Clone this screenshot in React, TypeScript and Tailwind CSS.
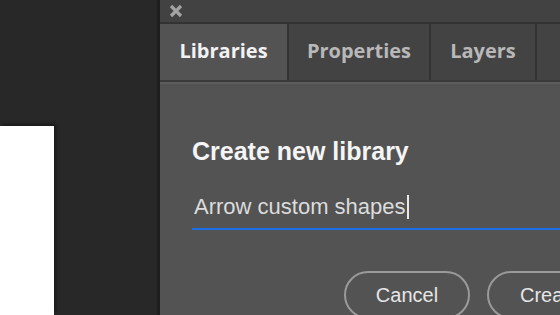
import React from 'react';

const tabs = [
  { label: 'Libraries', width: 'w-[127px]', active: true },
  { label: 'Properties', width: 'w-[142px]', active: false },
  { label: 'Layers', width: 'w-[106px]', active: false },
  { label: '', width: 'w-[40px]', active: false },
];

const App: React.FC = () => {
  return (
    <div className="flex w-[560px] h-[315px] overflow-hidden bg-[#282828]">
      {/* canvas area */}
      <div className="w-[157px] shrink-0 bg-[#282828] flex flex-col">
        <div className="w-[54px] mt-[126px] flex-1 bg-white shadow-[2px_-2px_4px_rgba(0,0,0,0.4)]" />
      </div>
      <div className="w-[3px] shrink-0 bg-[#1f1f1f]" />

      {/* panel */}
      <div className="flex-1 flex flex-col bg-[#535353] min-w-0">
        <div className="h-[22px] shrink-0 bg-[#424242] flex items-center pl-[9px]">
          <svg width="14" height="14" viewBox="0 0 14 14">
            <path d="M2 2 L12 12 M12 2 L2 12" stroke="#a3a3a3" strokeWidth="3.2" strokeLinecap="butt" />
          </svg>
        </div>
        <div className="h-[2px] shrink-0 bg-[#333333]" />
        <div className="h-[56px] shrink-0 flex">
          {tabs.map((t, i) => (
            <div
              key={i}
              className={`${t.width} shrink-0 flex items-center justify-center pb-[3px] text-[20px] font-bold ${
                t.active ? 'bg-[#535353] text-[#f2f2f2]' : 'bg-[#434343] text-[#b8b8b8] border-l-2 border-[#333333]'
              }`}
              style={{ fontFamily: '"Open Sans", sans-serif' }}
            >
              {t.label}
            </div>
          ))}
        </div>
        <div className="h-[2px] shrink-0 bg-[#3a3a3a]" />
        <div className="h-[2px] shrink-0 bg-[#5d5d5d]" />

        <div className="flex-1 pl-[32px] pt-[55px]" style={{ fontFamily: '"Liberation Sans", Arial, sans-serif' }}>
          <div className="text-[25px] font-bold text-[#f5f5f5] leading-none whitespace-nowrap">Create new library</div>
          <div className="mt-[30px] flex items-center h-[26px] pl-[2px] text-[22px] text-[#dcdcdc] leading-none whitespace-nowrap">
            Arrow custom shapes
            <span className="inline-block w-[2px] h-[24px] bg-[#e8e8e8] ml-[1px]" />
          </div>
          <div className="mt-[8px] h-[2px] bg-[#1a6ee6]" />
          <div className="mt-[41px] flex gap-[17px] pl-[152px] whitespace-nowrap">
            <div className="w-[126px] h-[48px] shrink-0 rounded-full border-2 border-[#9a9a9a] flex items-center justify-center text-[20px] text-[#e6e6e6]">
              Cancel
            </div>
            <div className="w-[126px] h-[48px] shrink-0 rounded-full border-2 border-[#9a9a9a] flex items-center justify-center text-[20px] text-[#e6e6e6]">
              Create
            </div>
          </div>
        </div>
      </div>
    </div>
  );
};

export default App;
